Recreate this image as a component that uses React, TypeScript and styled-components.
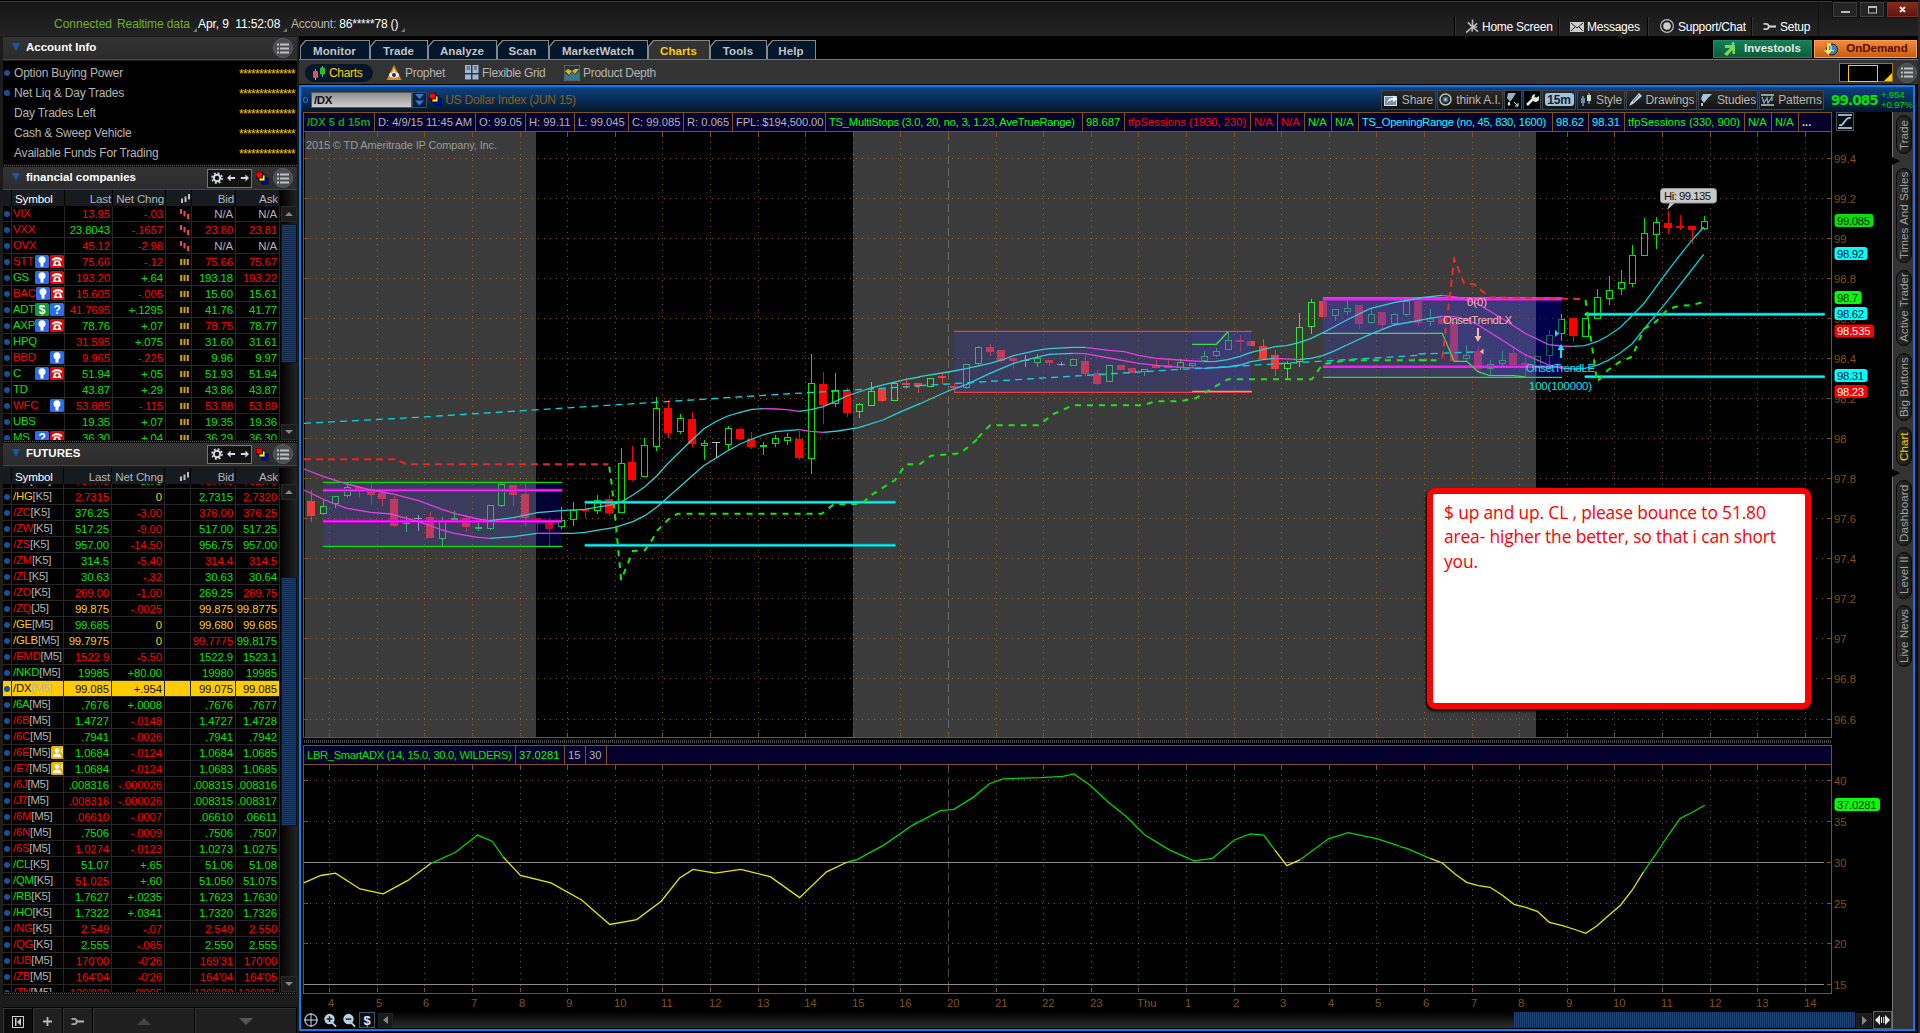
import React from 'react';
import styled, { createGlobalStyle, css } from 'styled-components';

const Global = createGlobalStyle`
  *{box-sizing:border-box}
  html,body{margin:0;padding:0;background:#000;overflow:hidden}
  body{font:11px/1 "Liberation Sans",Arial,sans-serif;color:#b4b4b4}
`;

const RED = '#ff0000', GREEN = '#00e400', YEL = '#ffcc00', GREY = '#b4b4b4', BROWN = '#80521a';
const colorOf: Record<string, string> = { r: RED, g: GREEN, y: YEL, w: GREY };

/* ---------- frame ---------- */
const Root = styled.div`width:1920px;height:1033px;display:flex;flex-direction:column;background:#000;white-space:nowrap;overflow:hidden;border-right:2px solid #2a2a2a`;
const Header = styled.header`height:36px;flex:none;display:flex;border-top:1px solid #000;box-shadow:inset 0 1px #3a3a3a;background:linear-gradient(#161616,#232323);padding-left:54px;font-size:12px`;
const Status = styled.div<{ $c: string; $w: number; $ls?: number }>`width:${p => p.$w}px;padding-top:17px;color:${p => p.$c};letter-spacing:${p => p.$ls ?? 0}px;flex:none;& b{font-weight:400;color:#fff}`;
const Corner = styled.i`display:inline-block;border-left:4px solid transparent;border-bottom:4px solid #777;margin-left:3px;transform:translateY(4px)`;
const HeadLinks = styled.nav`display:flex;margin-left:auto;padding-top:16px`;
const HeadLink = styled.a<{ $w: number }>`width:${p => p.$w}px;height:19px;border-left:1px solid #000;box-shadow:inset 1px 0 #333;display:flex;align-items:center;gap:3px;color:#fff;font-size:12px;padding-left:11px;letter-spacing:-.25px`;
const WinButtons = styled.div`display:flex;width:100px;gap:1px;padding-left:13px;border-left:1px solid #111`;
const WinBtn = styled.button<{ $close?: boolean; $w: number }>`height:17px;width:${p => p.$w}px;flex:none;padding:0;border:1px solid #111;box-shadow:inset 0 0 0 1px ${p => (p.$close ? '#7a2c20' : '#3c3c3c')};background:${p => (p.$close ? 'linear-gradient(#8a2a1c,#5c150c)' : '#242424')};display:flex;align-items:center;justify-content:center`;
const Body = styled.div`display:flex;height:997px`;

/* ---------- left side ---------- */
const Left = styled.aside`width:299px;flex:none;padding:1px 2px 0 3px;background:#1b1b1b;display:flex;flex-direction:column`;
const GadgetHead = styled.div`height:23px;flex:none;display:flex;align-items:center;background:linear-gradient(#333,#2b2b2b);border-bottom:1px solid #444;padding:0 4px 0 9px;color:#fff;font-weight:700;font-size:11.5px;
  & span{margin-left:6px;flex:1}`;
const Tri = styled.i`border:4.5px solid transparent;border-top:8px solid #1557b0;border-bottom:0;margin-top:-2px`;
const ListBtn = styled.i`width:20px;height:20px;border-radius:50%;background:#4a4d52;border:1px solid #5a5f66;display:flex;align-items:center;justify-content:center;margin-left:4px`;
const ToolBox = styled.i`width:45px;height:19px;border:1px solid #a87000;background:#111;display:flex;align-items:center;justify-content:center;gap:4px;margin-right:4px`;
const Account = styled.div`height:104px;flex:none;background:#000;padding:2px 2px 0 0;border-top:1px solid #222`;
const AccRow = styled.div`height:20px;display:flex;align-items:center;font-size:12px;letter-spacing:-.2px;& span{flex:1}& b{color:${YEL};font-weight:400;letter-spacing:-.67px;font-size:12px;padding-top:1px}`;
const Dot = styled.i<{ $on?: boolean; $m?: number }>`width:6px;height:6px;border-radius:50%;background:${p => (p.$on === false ? 'none' : '#1a4f96')};margin:0 ${p => p.$m ?? 0}px 0 1px;flex:none`;
const Dotted = styled.div`height:3px;flex:none;background:repeating-linear-gradient(90deg,#000 0 1px,#555 1px 2px);border:solid #111;border-width:1px 0`;
const Quotes = styled.div<{ $h: number; $gap: number }>`display:flex;height:${p => p.$h}px;margin-top:${p => p.$gap}px;flex:none;background:#000;overflow:hidden`;
const QTable = styled.div`width:277px;display:flex;flex-direction:column`;
const QHead = styled.div<{ $c: string }>`display:grid;grid-template-columns:${p => p.$c};height:16px;flex:none;background:#151b1f;font-size:11.6px;letter-spacing:-.15px;
  & > *{border-right:1px solid #000;padding:3px 1px 0 0;text-align:right}& > .s{text-align:left;padding-left:3px;color:#fff}`;
const QRows = styled.div`flex:1;min-height:0;overflow:hidden`;
const QShift = styled.div<{ $shift: number }>`margin-top:${p => p.$shift}px`;
const QRow = styled.div<{ $c: string; $sel?: boolean }>`display:grid;grid-template-columns:${p => p.$c};height:16px;background:${p => (p.$sel ? YEL : '#000')};
  & > *{border-right:1px solid #262626;border-bottom:1px solid #262626;height:16px;overflow:hidden}
  & > :first-child{display:flex;align-items:center}`;
const Num = styled.div<{ $c: string }>`color:${p => p.$c};text-align:right;padding:3px 2px 0 0;font-size:11.4px;letter-spacing:-.12px`;
const Sym = styled.div<{ $c: string }>`color:${p => p.$c};display:flex;align-items:center;font-size:11.4px;letter-spacing:-.25px;padding:1px 0 0 1px;& em{font-style:normal;color:${GREY}}& svg{flex:none;margin:-1px 0 0 1px}& svg:first-of-type{margin-left:auto}`;
const Trend = styled.div`display:flex;align-items:center;justify-content:flex-end;padding-right:2px`;
const Scroll = styled.div`width:17px;display:flex;flex-direction:column;background:linear-gradient(90deg,#000,#242424);padding-left:1px`;
const ScrollBtn = styled.i<{ $up?: boolean }>`height:16px;flex:none;background:#1c1c1c;border:1px solid #2a2a2a;display:flex;align-items:center;justify-content:center;
  &::after{content:"";border:4px solid transparent;${p => (p.$up ? 'border-bottom:4px solid #888;border-top:0' : 'border-top:4px solid #888;border-bottom:0')}}`;
const Thumb = styled.i<{ $h: number }>`height:${p => p.$h}px;flex:none;background:repeating-linear-gradient(#1c3c66 0 1px,#122a4b 1px 2px);border:1px solid #0a1526`;
const Space = styled.i<{ $h: number }>`height:${p => p.$h}px;flex:none`;
const LeftFoot = styled.div`height:26px;flex:none;display:flex;margin-top:12px;background:#1d1d1d;border-top:1px solid #050505`;
const FootBtn = styled.button<{ $w: number; $on?: boolean }>`width:${p => p.$w}px;border:0;border-right:1px solid #000;box-shadow:inset 1px 1px #333;background:${p => (p.$on ? '#0c0c0c' : '#1f1f1f')};padding:2px 0 0;display:flex;align-items:center;justify-content:center`;

/* ---------- right side ---------- */
const Main = styled.main`flex:1;min-width:0;display:flex;flex-direction:column`;
const TabRow = styled.div`height:23px;display:flex;align-items:flex-end;padding-left:1px;padding-right:1px`;
const Tab = styled.a<{ $w: number; $on?: boolean }>`width:${p => p.$w}px;height:19px;clip-path:polygon(5px 0,100% 0,100% 100%,0 100%,0 6px);background:#888;padding:1px 1px 0 1px;flex:none;
  & span{display:flex;height:18px;align-items:center;justify-content:center;clip-path:polygon(5px 0,100% 0,100% 100%,0 100%,0 6px);background:${p => (p.$on ? '#333' : '#04162a')};color:${p => (p.$on ? YEL : '#c4c4c4')};font-weight:700;font-size:11.5px;letter-spacing:.1px;padding:3px 1px 0 0}`;
const Promo = styled.a<{ $w: number; $o?: boolean }>`width:${p => p.$w}px;height:18px;margin:0 0 1px 2px;display:flex;align-items:center;justify-content:center;gap:8px;font-weight:700;font-size:11.5px;
  background:${p => (p.$o ? 'linear-gradient(#f08b3a,#c85e10)' : 'linear-gradient(#148055,#0a5c3a)')};color:${p => (p.$o ? '#5c0d05' : '#e8e8e8')};border:1px solid ${p => (p.$o ? '#ffa050' : '#1b8a60')}`;
const PromoGap = styled.i`flex:1`;
const SubBar = styled.div`height:26px;flex:none;background:#333;border-top:1px solid #777;border-bottom:1px solid #000;display:flex;align-items:center;padding:1px 1px 0 6px;font-size:12px;letter-spacing:-.3px`;
const SubItem = styled.a<{ $w: number; $on?: boolean }>`width:${p => p.$w}px;height:18px;display:flex;align-items:center;gap:3px;flex:none;
  ${p => p.$on && css`background:#04162a;border-radius:9px;color:${YEL};padding-left:7px;margin-right:13px;`}`;
const LayoutBox = styled.i`width:54px;height:19px;border:1px solid #a87000;background:#000;margin-left:auto;display:flex;align-items:center;padding-left:8px;position:relative;
  &::before{content:"";width:28px;height:15px;border:1px solid ${YEL};margin-top:1px}
  &::after{content:"";position:absolute;right:0;bottom:0;border-left:8px solid transparent;border-bottom:8px solid ${YEL}}`;
const Frame = styled.section`flex:none;height:946px;width:1616px;border:2px solid #0a7cf5;display:flex;flex-direction:column;background:#000`;
const SymbolBar = styled.div`height:25px;flex:none;background:linear-gradient(#0d4282,#04162b);display:flex;align-items:center;padding-left:2px;color:#8a6010;font-size:12px;letter-spacing:-.2px`;
const Ring = styled.i`width:5px;height:6px;border:1px solid #1f6fd0;border-radius:50%;margin-right:3px`;
const Input = styled.div`width:101px;height:16px;border:1px solid #555;background:linear-gradient(#8f8f8f,#cfcfcf);color:#111;font-weight:700;font-size:11.5px;padding:2px;letter-spacing:-.4px`;
const Drop = styled.i`width:15px;height:16px;background:#0a1f3c;border:1px solid #3a4a60;display:flex;align-items:center;justify-content:center;margin-right:2px`;
const Tools = styled.div`display:flex;height:20px;margin-left:auto;gap:1px`;
const Tool = styled.button<{ $w: number; $dark?: boolean }>`width:${p => p.$w}px;height:20px;font:12px "Liberation Sans",Arial,sans-serif;letter-spacing:-.15px;color:#b4b4b4;background:${p => (p.$dark ? '#000' : 'linear-gradient(#2a2a2a,#141414)')};border:1px solid #3c444e;padding:0;display:flex;align-items:center;justify-content:center;gap:4px`;
const Period = styled.b`background:#9fc1da;border-radius:3px;color:#123;width:29px;height:13px;line-height:14px;font-size:12px`;
const Price = styled.b`color:${GREEN};font-size:13.5px;width:54px;padding-left:7px;font-family:"DejaVu Sans",Verdana,sans-serif;letter-spacing:-.9px;padding-top:3px`;
const Change = styled.div`width:35px;color:${GREEN};font-size:9.6px;line-height:10px;padding-left:3px;opacity:.9`;
const Inner = styled.div`display:flex;flex:1;min-height:0`;
const Charts = styled.div`width:1591px;padding-left:2px;display:flex;flex-direction:column;& > svg{display:block;flex:none}`;
const InfoRow = styled.div`height:20px;flex:none;display:flex`;
const Info = styled.div<{ $w?: number }>`height:20px;width:${p => (p.$w ? p.$w + 'px' : 'auto')};display:flex;border:1px solid ${BROWN};border-width:1px 1px 1px 0;background:#05002c;flex:none`;
const Cell = styled.div<{ $w: number; $c?: string; $b?: boolean; $ls?: number }>`width:${p => p.$w}px;border-left:1px solid ${BROWN};padding:4px 0 0 3px;font-size:11.2px;color:${p => p.$c ?? GREY};font-weight:${p => (p.$b ? 700 : 400)};letter-spacing:${p => p.$ls ?? 0}px;flex:none`;
const CurveBtn = styled.i`width:18px;height:19px;border:1px solid #3d5468;background:#05080c;margin-left:4px;display:flex;align-items:center;justify-content:center`;
const Splitter = styled.div`height:6px;width:1529px;flex:none;background:repeating-linear-gradient(90deg,#000 0 1px,#4a4a4a 1px 2px);border:solid #000;border-width:1px 0 2px`;
const HScroll = styled.div`height:18px;display:flex;align-items:center;& > svg{margin-right:2px}`;
const HTrack = styled.div`flex:1;height:16px;background:linear-gradient(#000,#2c2c2c);display:flex;justify-content:flex-end`;
const HThumb = styled.i`width:341px;height:15px;background:repeating-linear-gradient(90deg,#1f4474 0 1px,#122a4b 1px 2px)`;
const HBtn = styled.i<{ $w: number; $b?: boolean }>`width:${p => p.$w}px;height:${p => (p.$b ? 18 : 15)}px;background:#1a1a1a;display:flex;align-items:center;justify-content:center;margin-left:1px;border:1px solid ${p => (p.$b ? '#4c6070' : '#222')}`;
const Side = styled.nav`width:21px;background:#333;border-left:1px solid #777;display:flex;flex-direction:column;align-items:center;padding:3px 0 0 1px`;
const SidePill = styled.a<{ $h: number; $gap: number; $on?: boolean }>`writing-mode:vertical-rl;transform:rotate(180deg);height:${p => p.$h}px;width:16px;margin-top:${p => p.$gap}px;border-radius:8px;border:1px solid #080808;background:linear-gradient(90deg,#191919,#2c2c2c);display:flex;align-items:center;justify-content:center;font-size:11.7px;color:${p => (p.$on ? YEL : '#a0a0a0')};flex:none`;
const Notch = styled.i`height:14px;width:100%;flex:none;display:flex;align-items:center;&::before{content:"";margin-left:-2px;border:4px solid transparent;border-left:8px solid #000;border-right:0}`;
const Stage = styled.div`position:relative;flex:none;height:607px;& svg{display:block}`;
const Note = styled.div`position:absolute;left:1124px;top:356px;width:384px;height:221px;border:6px solid #ff0000;border-radius:8px;background:#fff;color:#ff0000;font:17.4px/24.3px "Open Sans","Noto Sans",sans-serif;padding:6px 11px;box-shadow:-1px 2px 3px #000;letter-spacing:-.14px`;

/* ---------- icons ---------- */
const Gear = () => <svg width="12" height="12" viewBox="0 0 12 12"><circle cx="6" cy="6" r="3.2" fill="none" stroke="#d6d6e4" strokeWidth="2" /><circle cx="6" cy="6" r="5" fill="none" stroke="#d6d6e4" strokeWidth="1.6" strokeDasharray="2 1.93" /></svg>;
const Arrow = ({ flip }: { flip?: boolean }) => <svg width="9" height="8" viewBox="0 0 10 8"><path d={flip ? 'M10 4L6 0V3H1V5H6V8Z' : 'M0 4L4 0V3H9V5H4V8Z'} fill="#d6d6e4" /></svg>;
const Links = () => <svg width="13" height="13" viewBox="0 0 13 13"><g stroke="#000" strokeWidth=".8"><rect x="6" y="6" width="6" height="6" fill="#00f" /><rect x="3" y="3" width="6" height="6" fill="#ff0" /><rect x="0" y="0" width="6.5" height="6" fill="#f00" /></g></svg>;
const ListIcon = () => <svg width="12" height="11" viewBox="0 0 12 11"><path d="M0 1.5H2M3 1.5H12M0 5.5H2M3 5.5H12M0 9.5H2M3 9.5H12" stroke="#c2c2c2" strokeWidth="2" /></svg>;
const BarsIcon = ({ kind }: { kind: string }) => kind === 'y'
  ? <svg width="9" height="6"><path d="M1.2 0V6M4.5 0V6M7.8 0V6" stroke="#d9a400" strokeWidth="2" /></svg>
  : kind === 'd' ? <svg width="9" height="10"><path d="M1 0V5M4.5 2V7.5M8 5V10" stroke="#ff4040" strokeWidth="2" /></svg>
    : <svg width="9" height="9"><path d="M1 4.5V9M4.5 2.5V8M8 0V5.5" stroke="#bbb" strokeWidth="2" /></svg>;
const Flag = ({ k }: { k: string }) => {
  const bg: Record<string, string> = { b: '#2a6cf0', q: '#2a6cf0', t: '#e00808', s: '#0d9a3e', v: '#e8b800' };
  return <svg width="14" height="13" viewBox="0 0 14 13"><rect width="14" height="13" rx="1.5" fill={bg[k]} />
    {k === 'b' && <><circle cx="7" cy="4.8" r="3.5" fill="#fff" /><rect x="5.5" y="8" width="3" height="3.6" fill="#fff" /></>}
    {k === 't' && <><path d="M2 5.5V4Q7 0 12 4V5.5H9.6V4.4H4.4V5.5Z" fill="#fff" /><path d="M4.5 5.5H9.5L11.5 11H2.5Z" fill="#fff" /><circle cx="7" cy="8.3" r="1.5" fill="#e00808" /></>}
    {k === 's' && <text x="7" y="11" textAnchor="middle" fontSize="12" fontWeight="700" fill="#fff">$</text>}
    {k === 'q' && <text x="7" y="11" textAnchor="middle" fontSize="12" fontWeight="700" fill="#fff">?</text>}
    {k === 'v' && <><circle cx="6" cy="4.6" r="2.4" fill="#fff" /><path d="M2 11Q2 8 6 7.6Q10 8 10 11Z" fill="#fff" /><path d="M10 3.2Q11 4.7 10 6.2M11.6 2Q13.2 4.7 11.6 7.4" stroke="#fff" fill="none" /></>}
  </svg>;
};
const Wrench = ({ c = '#ccc' }: { c?: string }) => <svg width="14" height="9" viewBox="0 0 14 9" fill="none" stroke={c}><path d="M.5 1.8H3A2.7 2.7 0 0 1 3 7.200H.5" strokeWidth="1.7" /><path d="M5.500 4.500H13" strokeWidth="2.200" /></svg>;

/* ---------- quote data ---------- */
type Q = [string, string, string, string, string, string, string, string];
/* symbol, flags, last, net change, trend, bid, ask, colour codes for symbol/last/change/bid/ask */
const companies: Q[] = [
  ['VIX', '', '13.95', '-.03', 'd', 'N/A', 'N/A', 'rrrww'], ['VXX', '', '23.8043', '-.1657', 'd', '23.80', '23.81', 'rgrrr'],
  ['OVX', '', '45.12', '-2.98', 'd', 'N/A', 'N/A', 'rrrww'], ['STT', 'bt', '75.66', '-.12', 'y', '75.66', '75.67', 'rrrrr'],
  ['GS', 'bt', '193.20', '+.64', 'y', '193.18', '193.22', 'grggr'], ['BAC', 'bt', '15.605', '-.005', 'y', '15.60', '15.61', 'rrrgg'],
  ['ADT', 'sq', '41.7695', '+.1295', 'y', '41.76', '41.77', 'grggg'], ['AXP', 'bt', '78.76', '+.07', 'y', '78.75', '78.77', 'gggrg'],
  ['HPQ', '', '31.595', '+.075', 'y', '31.60', '31.61', 'grggg'], ['BBD', 'b', '9.965', '-.225', 'y', '9.96', '9.97', 'rrrgg'],
  ['C', 'bt', '51.94', '+.05', 'y', '51.93', '51.94', 'ggggg'], ['TD', '', '43.87', '+.29', 'y', '43.86', '43.87', 'ggggg'],
  ['WFC', 'b', '53.885', '-.115', 'y', '53.88', '53.89', 'rrrrr'], ['UBS', '', '19.35', '+.07', 'y', '19.35', '19.36', 'ggggg'],
  ['MS', 'qt', '36.30', '+.04', 'y', '36.29', '36.30', 'ggggg'],
];
const futures: Q[] = [
  ['/PA[M5]', '', '767.40', '+5.75', '', '767.40', '762.70', 'grgrr'], ['/HG[K5]', '', '2.7315', '0', '', '2.7315', '2.7320', 'yrygr'],
  ['/ZC[K5]', '', '376.25', '-3.00', '', '376.00', '376.25', 'rgrrr'], ['/ZW[K5]', '', '517.25', '-9.00', '', '517.00', '517.25', 'rgrgg'],
  ['/ZS[K5]', '', '957.00', '-14.50', '', '956.75', '957.00', 'rgrgg'], ['/ZM[K5]', '', '314.5', '-5.40', '', '314.4', '314.5', 'rgrrr'],
  ['/ZL[K5]', '', '30.63', '-.32', '', '30.63', '30.64', 'rgrgg'], ['/ZO[K5]', '', '269.00', '-1.00', '', '269.25', '269.75', 'rrrgr'],
  ['/ZQ[J5]', '', '99.875', '-.0025', '', '99.875', '99.8775', 'ryryy'], ['/GE[M5]', '', '99.685', '0', '', '99.680', '99.685', 'ygyyy'],
  ['/GLB[M5]', '', '99.7975', '0', '', '99.7775', '99.8175', 'yyyrg'], ['/EMD[M5]', '', '1522.9', '-5.50', '', '1522.9', '1523.1', 'rrrgg'],
  ['/NKD[M5]', '', '19985', '+80.00', '', '19980', '19985', 'ggggg'], ['/DX[M5]', '', '99.085', '+.954', '', '99.075', '99.085', 'kkkkk'],
  ['/6A[M5]', '', '.7676', '+.0008', '', '.7676', '.7677', 'ggggg'], ['/6B[M5]', '', '1.4727', '-.0148', '', '1.4727', '1.4728', 'rgrgg'],
  ['/6C[M5]', '', '.7941', '-.0026', '', '.7941', '.7942', 'rgrgg'], ['/6E[M5]', 'v', '1.0684', '-.0124', '', '1.0684', '1.0685', 'rgrgg'],
  ['/E7[M5]', 'v', '1.0684', '-.0124', '', '1.0683', '1.0685', 'rgrgg'], ['/6J[M5]', '', '.008316', '-.000026', '', '.008315', '.008316', 'rgrgg'],
  ['/J7[M5]', '', '.008316', '-.000026', '', '.008315', '.008317', 'rrrgg'], ['/6M[M5]', '', '.06610', '-.0007', '', '.06610', '.06611', 'rrrgg'],
  ['/6N[M5]', '', '.7506', '-.0009', '', '.7506', '.7507', 'rgrgg'], ['/6S[M5]', '', '1.0274', '-.0123', '', '1.0273', '1.0275', 'rrrgg'],
  ['/CL[K5]', '', '51.07', '+.65', '', '51.06', '51.08', 'ggggg'], ['/QM[K5]', '', '51.025', '+.60', '', '51.050', '51.075', 'grggg'],
  ['/RB[K5]', '', '1.7627', '+.0235', '', '1.7623', '1.7630', 'ggggg'], ['/HO[K5]', '', '1.7322', '+.0341', '', '1.7320', '1.7326', 'ggggg'],
  ['/NG[K5]', '', '2.549', '-.07', '', '2.549', '2.550', 'rrrrr'], ['/QG[K5]', '', '2.555', '-.065', '', '2.550', '2.555', 'rgrgg'],
  ['/UB[M5]', '', "170'00", "-0'26", '', "169'31", "170'00", 'rrrrr'], ['/ZB[M5]', '', "164'04", "-0'26", '', "164'04", "164'05", 'rrrrr'],
  ['/ZN[M5]', '', "129'020", "-0'095", '', "129'020", "129'025", 'rrrrr'],
];

const QuoteTable = ({ rows, cols, height, shift, gap, top, thumb }: { rows: Q[]; cols: string; height: number; shift: number; gap: number; top: number; thumb: number }) => (
  <Quotes $h={height} $gap={gap}>
    <QTable>
      <QHead $c={cols}><div /><div className="s">Symbol</div><div>Last</div><div>Net Chng</div><div><BarsIcon kind="h" /></div><div>Bid</div><div>Ask</div></QHead>
      <QRows><QShift $shift={shift}>
        {rows.map(([s, flags, last, chg, trend, bid, ask, c]) => {
          const sel = c[0] === 'k';
          const col = (i: number) => (sel ? '#111' : colorOf[c[i]]);
          const [root, month] = s.split('[');
          return (
            <QRow key={s} $c={cols} $sel={sel}>
              <div><Dot /></div>
              <Sym $c={col(0)}>{root}{month && <em>[{month}</em>}{flags.split('').map(f => <Flag key={f} k={f} />)}</Sym>
              <Num $c={col(1)}>{last}</Num><Num $c={col(2)}>{chg}</Num>
              <Trend>{trend && <BarsIcon kind={trend} />}</Trend>
              <Num $c={col(3)}>{bid}</Num><Num $c={col(4)}>{ask}</Num>
            </QRow>
          );
        })}
      </QShift></QRows>
    </QTable>
    <Scroll><Space $h={16} /><ScrollBtn $up /><Space $h={top} /><Thumb $h={thumb} /><Space $h={height - 48 - top - thumb} /><ScrollBtn /></Scroll>
  </Quotes>
);
const QuoteHead = ({ title }: { title: string }) => (
  <GadgetHead><Tri /><span>{title}</span><ToolBox><Gear /><Arrow /><Arrow flip /></ToolBox><Links /><ListBtn><ListIcon /></ListBtn></GadgetHead>
);

/* ---------- chart data ---------- */
const hours = [329, 377, 424, 472, 520, 567, 615, 662, 710, 758, 805, 853, 900, 948, 996, 1043, 1091, 1138, 1186, 1234, 1281, 1329, 1376, 1424, 1472, 1519, 1567, 1614, 1662, 1710, 1757, 1805];
const hourNames = ['4', '5', '6', '7', '8', '9', '10', '11', '12', '13', '14', '15', '16', '20', '21', '22', '23', 'Thu', '1', '2', '3', '4', '5', '6', '7', '8', '9', '10', '11', '12', '13', '14'];

/* each page of history has its own origin; y values are thirds of a pixel */
type Page = { x: number; y: number; s: number };
const A: Page = { x: 300, y: 360, s: 2.529 }, B: Page = { x: 860, y: 280, s: 2.8 }, C: Page = { x: 1300, y: 180, s: 2.529 }, D: Page = { x: 1400, y: 740, s: 3 };
type Bar = [string, number, number, number?, number?]; // colour, body top, body bottom, high, low
const pageA: Bar[] = [
  ['r', 423, 467, 390, 486], ['g', 438, 462, 418, 466], ['g', 408, 431, 408, 444], ['g', 381, 408, 370, 411], ['r', 381, 391, 381, 411], ['r', 390, 405, 369, 435], ['r', 399, 417, 399, 438], ['r', 417, 498, 408, 501], ['g', 481, 491, 468, 516], ['w', 475, 475, 465, 513],
  ['r', 471, 534, 456, 534], ['g', 481, 536, 471, 558], ['g', 475, 481, 453, 484], ['r', 474, 501, 465, 516], ['g', 501, 507, 489, 513], ['g', 435, 507, 435, 510], ['g', 373, 437, 369, 440], ['r', 375, 405, 375, 438], ['r', 402, 474, 369, 498], ['r', 474, 484, 474, 520],
  ['r', 484, 507, 474, 558], ['g', 481, 500, 441, 507], ['g', 450, 480, 426, 498], ['r', 448, 453, 432, 475], ['g', 420, 452, 405, 461], ['r', 417, 459, 405, 468], ['g', 310, 458, 264, 458], ['r', 306, 360, 258, 363], ['g', 256, 350, 234, 350], ['g', 145, 260, 111, 273],
  ['r', 144, 219, 120, 234], ['g', 175, 216, 162, 222], ['r', 177, 252, 156, 261], ['g', 249, 258, 240, 300], ['w', 247, 247, 247, 294], ['g', 205, 254, 198, 270], ['r', 207, 237, 204, 240], ['r', 237, 261, 216, 267], ['g', 256, 261, 246, 285], ['g', 235, 251, 225, 261],
  ['g', 232, 242, 219, 255], ['r', 237, 294, 213, 300], ['g', 70, 297, -18, 342], ['r', 72, 135, 36, 192], ['g', 91, 131, 39, 141], ['r', 93, 159, 84, 171], ['g', 133, 156, 129, 174],
];
const pageB: Bar[] = [
  ['g', 333, 377, 306, 377], ['r', 324, 362, 324, 365], ['g', 310, 362, 306, 362], ['r', 309, 315, 294, 327], ['r', 309, 318, 309, 339], ['g', 295, 320], ['r', 288, 294, 279, 312], ['r', 318, 324, 310, 336], ['g', 253, 323, 253, 327], ['g', 202, 251, 198, 258],
  ['r', 201, 216, 192, 228], ['r', 210, 243, 210, 249], ['r', 234, 243, 231, 267], ['w', 241, 241, 225, 261], ['g', 235, 248, 222, 261], ['r', 240, 249, 240, 258], ['w', 253, 253, 246, 258], ['g', 238, 257], ['r', 243, 282, 225, 288], ['r', 279, 312, 270, 315],
  ['g', 256, 305], ['r', 255, 270], ['r', 264, 279], ['g', 268, 277, 268, 288], ['r', 255, 264, 240, 264], ['r', 255, 264, 240, 264], ['g', 247, 265, 237, 270], ['g', 250, 257, 250, 261], ['g', 229, 242, 213, 246], ['g', 214, 227, 204, 231],
  ['g', 181, 209, 156, 209], ['r', 180, 186, 165, 216], ['r', 183, 198], ['r', 198, 237, 177, 240], ['r', 225, 267, 210, 288], ['g', 249, 266, 243, 297], ['g', 142, 246, 99, 261], ['g', 67, 140, 57, 162], ['r', 63, 111], ['g', 87, 107, 87, 123],
  ['g', 85, 95, 61, 105], ['r', 75, 132, 75, 147], ['g', 103, 128, 84, 133], ['r', 96, 135, 96, 147], ['g', 103, 131, 98, 138], ['g', 63, 104, 54, 110],
];
const pageC: Bar[] = [
  ['r', 362, 429, 362, 438], ['g', 415, 425, 387, 438], ['r', 415, 432], ['r', 426, 543], ['g', 525, 536, 495, 543], ['r', 513, 567, 498, 573], ['g', 552, 567, 540, 585], ['g', 541, 552, 513, 561], ['r', 519, 555, 498, 555], ['r', 549, 555, 528, 591],
  ['g', 528, 560], ['g', 466, 528, 451, 561], ['g', 417, 461, 403, 483], ['r', 414, 468, 414, 486], ['g', 415, 470], ['g', 352, 418, 327, 418], ['g', 331, 356, 288, 375], ['g', 307, 326, 270, 345], ['g', 226, 311, 195, 321], ['g', 160, 227, 114, 227],
  ['g', 127, 164, 111, 207], ['r', 129, 144, 93, 162], ['r', 138, 143, 105, 150], ['r', 138, 150, 138, 192], ['g', 124, 147, 108, 150],
];
const barX = (k: number) => Math.round(311 + 11.905 * k);
const Bars = ({ page, from, bars }: { page: Page; from: number; bars: Bar[] }) => (
  <g shapeRendering="crispEdges">
    {bars.map(([c, t, b, h = t, l = b], i) => {
      const x = barX(from + i), k = from + i;
      const grey = x < 536 || (x > 853 && x < 1536);
      const y = (v: number) => Math.round(page.y + v / 3);
      const col = c === 'w' ? '#b8b8b8' : c === 'r' ? (grey ? '#f03c3c' : '#ff0000') : grey ? '#3ce03c' : '#00e400';
      if (c === 'w') return <path key={k} d={`M${x - 4} ${y(t) + 0.5}H${x + 4}M${x + 0.5} ${y(h)}V${y(l)}`} stroke={col} />;
      if (c === 'r') return <g key={k} fill={col}><rect x={x - 4} y={y(t)} width="8" height={Math.max(2, y(b) - y(t))} /><rect x={x} y={y(h)} width="1" height={y(l) - y(h)} /></g>;
      return <g key={k}><path d={`M${x + 0.5} ${y(h)}V${y(t)}M${x + 0.5} ${y(b)}V${y(l)}`} stroke={col} /><rect x={x - 2.5} y={y(t) + 0.5} width="6" height={Math.max(1, y(b) - y(t) - 1)} fill="none" stroke={col} /></g>;
    })}
  </g>
);

const MAG = '#e83ce8', CY = '#2fd0d4';
const at = (p: Page, s: string) => s.trim().split(' ').map(v => { const [a, b] = v.split(','); return `${(p.x + +a / p.s).toFixed(1)},${(p.y + +b / 3).toFixed(1)}`; }).join(' ');
const Line = ({ p, d, c, w = 1.3, dash }: { p: Page; d: string; c: string; w?: number; dash?: string }) => <polyline points={at(p, d)} fill="none" stroke={c} strokeWidth={w} strokeDasharray={dash} />;

const averages: [Page, string, string][] = [
  [A, MAG, '10,327 60,350 119,372 179,390 239,403 300,422 359,448 390,460 450,477 480,482'],
  [A, CY, '480,482 540,473 600,458 660,452 720,448 790,434 812,426 842,405 872,380 902,348 931,310 991,240 1021,207 1051,185 1082,168 1113,157 1143,148 1173,146'],
  [A, MAG, '1173,146 1203,147 1232,149 1262,154'],
  [A, CY, '1262,154 1292,149 1323,140 1353,125 1383,108 1443,84 1480,73 1532,58 1568,51'],
  [A, MAG, '10,390 58,417 88,432 119,445 179,457 230,462 300,485 359,510 390,520 450,532 480,535'],
  [A, CY, '480,535 540,530 600,520'], [A, MAG, '600,520 660,520'],
  [A, CY, '660,520 690,520 720,517 797,502 842,485 872,467 902,442 931,412 991,348 1021,317 1082,272 1113,252 1143,237 1173,224 1203,215 1262,209'],
  [A, MAG, '1262,209 1292,214 1323,217'], [A, CY, '1323,217 1360,213 1413,203 1474,180 1520,155 1568,131'],
  [B, CY, '166,290 247,276 297,266 364,250 397,240 430,227 495,211 529,206 596,202 630,202'],
  [B, MAG, '630,202 697,211 740,215 780,226 829,235 895,240 962,245'],
  [B, CY, '962,245 995,244 1030,239 1064,229 1095,217 1128,209 1162,200 1195,197 1229,188 1262,176 1296,158 1363,120 1428,86 1495,68 1568,54'],
  [B, CY, '166,372 247,333 297,314 364,280 430,250 460,241 529,223 596,220'],
  [B, MAG, '596,220 630,221 697,234 780,250 862,260 962,265'],
  [B, CY, '962,265 1030,261 1064,255 1095,245 1128,239 1162,235'], [B, MAG, '1162,235 1229,239'],
  [B, CY, '1229,239 1262,235 1296,227 1330,212 1363,195 1428,163 1495,135 1568,121'],
  [C, CY, '300,354 359,346'], [C, MAG, '359,346 400,352 450,372 508,413 569,460 629,494 660,498 690,499'],
  [C, '#00d0d8', '690,499 720,497 751,485 779,467 809,443 840,407 870,370 930,273 960,227 990,182 1021,141'],
  [C, CY, '300,421 359,409'], [C, MAG, '359,409 390,410 420,417 450,434 508,478 569,524 629,555 660,564 690,567'],
  [C, '#00d0d8', '690,567 720,565 751,556 779,541 809,520 840,491 870,447 930,362 990,270 1021,223'],
];

const GridV = ({ y1, y2, day }: { y1: number; y2: number; day: string }) => (
  <g stroke="rgba(190,130,60,.66)" shapeRendering="crispEdges">
    {hours.map((x, i) => i === 13 ? <path key={x} d={`M${x}.5 ${y1}V${y2}`} stroke={day} strokeDasharray="8 4" /> : <path key={x} d={`M${x}.5 ${y1 + 4}V${y2}`} strokeDasharray="1 5" />)}
    {hours.map(x => <path key={'t' + x} d={`M${x}.5 ${y1}v5M${x}.5 ${y2}v-4`} stroke="#80521a" />)}
  </g>
);

const Tag = ({ y, w, bg, fg, t }: { y: number; w: number; bg: string; fg: string; t: string }) => (
  <g><rect x="1834.5" y={y - 6.5} width={w} height="13" rx="3" fill={bg} /><text x="1837" y={y + 4} fill={fg} fontSize="11.3" textLength={w - 6}>{t}</text></g>
);

const prices: [string, number][] = [['99.4', 158], ['99.2', 198], ['99', 238], ['98.8', 278], ['98.6', 318], ['98.4', 358], ['98.2', 398], ['98', 438], ['97.8', 478], ['97.6', 518], ['97.4', 558], ['97.2', 598], ['97', 638], ['96.8', 678], ['96.6', 719]];

const PriceChart = () => (
  <svg width="1589" height="607" viewBox="303 132 1589 607" fontFamily="Liberation Sans, Arial, sans-serif">
    <rect x="305" y="132" width="231" height="605" fill="#3b3b3b" /><rect x="853" y="132" width="683" height="605" fill="#3b3b3b" />
    <GridV y1={132} y2={737} day="#6a6a6a" />
    <g stroke="rgba(190,130,60,.66)" shapeRendering="crispEdges">{prices.map(([, y]) => <path key={y} d={`M304 ${y}.5H1826`} strokeDasharray="1 5" />)}</g>
    <path d="M303.5 132V737.5H1831.5V132" fill="none" stroke={BROWN} shapeRendering="crispEdges" />
    <g stroke={BROWN} shapeRendering="crispEdges">{prices.map(([, y]) => <path key={y} d={`M1827 ${y}.5h5M303 ${y}.5h5`} />)}</g>
    <g fill={BROWN} fontSize="11.3">{prices.map(([t, y]) => <text key={t} x="1834" y={y + 5}>{t}</text>)}</g>
    <text x="306" y="149" fill="#9a9a9a" fontSize="11" textLength="191">2015 © TD Ameritrade IP Company, Inc.</text>
    <Bars page={A} from={0} bars={pageA} /><Bars page={B} from={47} bars={pageB} /><Bars page={C} from={93} bars={pageC} />
    <rect x="323" y="482.5" width="213" height="64" fill="rgba(60,60,190,.27)" /><rect x="536" y="482.5" width="25" height="64" fill="rgba(0,0,190,.27)" />
    <rect x="954" y="331" width="297" height="61" fill="rgba(60,60,190,.27)" /><rect x="1192" y="331" width="59" height="60" fill="rgba(60,60,190,.2)" />
    <rect x="1323" y="299" width="213" height="78" fill="rgba(60,60,190,.27)" /><path d="M1323 299H1536V377H1480L1466 361H1454L1443 333H1323Z" fill="rgba(60,60,190,.27)" />
    <rect x="1536" y="299" width="25" height="78" fill="rgba(0,0,150,.5)" />
    <Line p={A} d="58,367 663,367" c="#00e400" /><Line p={A} d="58,559 663,559" c="#00e400" />
    <Line p={A} d="58,391 663,391" c="#e000e0" w={3} /><Line p={A} d="58,484 663,484" c="#e000e0" w={3} />
    <Line p={A} d="58,391 663,391" c="#ff30ff" w={1} /><Line p={A} d="58,484 663,484" c="#ff30ff" w={1} />
    <Line p={A} d="720,427 1506,427" c="#00b8c0" w={3} /><Line p={A} d="720,556 1506,556" c="#00b8c0" w={3} />
    <Line p={A} d="720,427 1506,427" c="#10ffff" w={1} /><Line p={A} d="720,556 1506,556" c="#10ffff" w={1} />
    <Line p={B} d="263,154 1097,154" c="#f03c3c" /><Line p={B} d="263,337 1097,337" c="#f03c3c" />
    <Line p={B} d="930,193 998,193 1030,155" c="#3ce03c" /><Line p={B} d="930,334 1097,334" c="#d8b020" />
    <Line p={C} d="58,354 663,354" c="#999" /><Line p={C} d="58,358 663,358" c="#f020f0" w={2.4} /><Line p={C} d="58,560 663,560" c="#f020f0" w={2.6} />
    <Line p={C} d="58,460 360,460 390,544 422,544 450,575 478,586 540,587 569,591" c="#3ce03c" /><Line p={C} d="58,592 663,592" c="#20e020" />
    <Line p={C} d="720,403 1327,403" c="#00c0c8" w={3} /><Line p={C} d="720,590 1327,590" c="#00c0c8" w={3} />
    <Line p={C} d="720,403 1327,403" c="#10ffff" w={1} /><Line p={C} d="720,590 1327,590" c="#10ffff" w={1} />
    {averages.map(([p, c, d], i) => <Line key={i} p={p} d={d} c={c} />)}
    <Line p={A} d="10,190 300,172 700,142 1200,104 1568,78" c="#00d8dc" dash="7 5" /><Line p={B} d="166,317 230,313 500,295 900,268 1300,243 1568,226" c="#00d8dc" dash="7 5" /><Line p={C} d="300,522 440,516" c="#00d8dc" dash="7 5" />
    <Line p={A} d="10,298 240,298 270,313 780,313" c="#ee2222" w={2} dash="7 5" />
    <Line p={A} d="782,320 788,370 795,450 805,570 812,660 842,573 872,571 890,540 905,510 930,480 955,461 1320,461 1350,433 1420,432 1445,405 1505,360 1532,313 1568,312 1596,287 1670,280 1716,235" c="#10e810" w={2} dash="6 6" />
    <Line p={B} d="330,473 364,436 500,436 540,403 596,376 790,376 829,364 895,364 940,355 995,319 1030,298 1265,298 1296,252 1363,241 1600,241" c="#20e020" w={2} dash="6 6" />
    <Line p={C} d="300,541 359,541" c="#20e020" w={2} dash="6 6" />
    <Line p={C} d="360,535 390,237 415,310 440,313 480,352 720,357" c="#ee2a2a" w={2} dash="7 5" />
    <Line p={C} d="722,360 735,470 751,605 779,570 809,545 840,530 870,447 900,425 930,388 960,377 990,376 1021,365" c="#00f000" w={2} dash="6 6" />
    <g fill="#ffb4a8"><text x="1467" y="306" fontSize="11.3">0(0)</text><text x="1443" y="324" fontSize="11.3" textLength="69">OnsetTrendLX</text><path d="M1477 328h2v8h2.5l-3.500 6l-3.500-6h2.500z" /><path d="M1480 351.500l3.500-3v6z" /></g>
    <g fill="#00e8f0"><text x="1526" y="372" fontSize="11.3" textLength="69">OnsetTrendLE</text><text x="1529" y="390" fontSize="11.3" textLength="63">100(100000)</text><path d="M1560 358h2v-8h2.500l-3.500-6l-3.500 6h2.500z" /><path d="M1559 333.500l-4-3.500v7z" /></g>
    <path d="M1667 210L1670 202H1676Z" fill="#c8c8c8" /><rect x="1660.500" y="188.500" width="56" height="14.500" rx="3" fill="#c8c8c8" stroke="#999" /><text x="1664" y="200" fontSize="11.3" fill="#111" textLength="47">Hi: 99.135</text>
    <Tag y={220.5} w={39} bg="#00e400" fg="#020" t="99.085" /><Tag y={253.5} w={33} bg="#00ffff" fg="#022" t="98.92" /><Tag y={297.5} w={27} bg="#00ff00" fg="#020" t="98.7" />
    <Tag y={313.5} w={33} bg="#00ffff" fg="#022" t="98.62" /><Tag y={331} w={39.5} bg="#ff0000" fg="#fff" t="98.535" /><Tag y={375.5} w={33} bg="#00ffff" fg="#022" t="98.31" /><Tag y={391.5} w={33} bg="#ff0000" fg="#fff" t="98.23" />
  </svg>
);

/* ADX points of the earlier sessions are kept on a 1568-wide grid and scaled up */
const adx = (s: string) => s.split(' ').map(v => v.split(',').map(n => (+n * 1.2245).toFixed(1)).join(',')).join(' ');
const AdxChart = () => (
  <svg width="1589" height="246" viewBox="303 765 1589 246" fontFamily="Liberation Sans, Arial, sans-serif">
    <GridV y1={765} y2={992} day="#4a4a4a" />
    <g shapeRendering="crispEdges">
      {[780, 821, 862, 903, 943, 984].map(y => <g key={y}><path d={`M304 ${y}.5H1826`} strokeDasharray="1 5" stroke="rgba(190,130,60,.66)" /><path d={`M1827 ${y}.5h5M303 ${y}.5h5`} stroke={BROWN} /></g>)}
      <path d="M304 862.5H1824M304 984.5H1824" stroke="#8c8c8c" />
      <path d="M303.5 765V993.5H1831.5V765" fill="none" stroke={BROWN} />
    </g>
    <g fill={BROWN} fontSize="11.3">
      {[['40', 780], ['35', 821], ['30', 862], ['25', 903], ['20', 943], ['15', 984]].map(([t, y]) => <text key={t} x="1834" y={+y + 5}>{t}</text>)}
      {hours.map((x, i) => <text key={x} x={x - 1} y="1007">{hourNames[i]}</text>)}
    </g>
    <g fill="none" strokeWidth="1.3">
      <g stroke="#e8e800">
        <polyline points={adx('248,721 262,715 274,713 294,726 313,730 333,719 352,705')} />
        <polyline points={adx('411,700 425,715 450,721 475,735 498,755 520,751 540,736 555,717 566,710 584,713 605,710 629,716 653,733 675,712 692,704')} />
        <polyline points={adx('1041,694 1051,707 1062,702')} />
        <polyline points={at(D, '90,355 127,369 165,402 200,427 235,437 270,442 305,464 342,493 377,502 412,514 448,547 485,556 520,567 557,580 590,558 625,527 662,495 697,450 731,395')} />
      </g>
      <g stroke="#00d400">
        <polyline points={adx('352,705 372,696 390,682 402,687 411,700')} />
        <polyline points={adx('692,704 700,702 722,690 745,674 768,662 779,661 795,651 808,640 819,636 850,635 868,634 877,632 890,641 905,655 920,667 935,682 955,694 975,703 990,701 1008,686 1021,681 1032,682 1041,694')} />
        <polyline points={adx('1062,702 1085,685 1101,680 1125,685 1143,691')} />
        <polyline points={at(D, '0,320 20,325 90,355')} />
        <polyline points={at(D, '731,395 767,343 803,288 841,235 877,217 914,196')} />
      </g>
    </g>
    <Tag y={804.5} w={45.5} bg="#00ff00" fg="#020" t="37.0281" />
  </svg>
);

const LIME = '#00ff00', AQUA = '#00ffff';
export default function App() {
  return (
    <Root>
      <Global />
      <Header>
        <Status $c="#6fae2d" $w={63}>Connected</Status>
        <Status $c="#6fae2d" $w={81} $ls={-0.1}>Realtime data<Corner /></Status>
        <Status $c="#fff" $w={93} $ls={-0.1}>Apr, 9&nbsp; 11:52:08<Corner /></Status>
        <Status $c={GREY} $w={120} $ls={-0.2}>Account: <b>86*****78 ()</b><Corner /></Status>
        <HeadLinks>
          <HeadLink $w={104}><svg width="13" height="16" viewBox="0 0 14 16"><path d="M7 0V7M7 8L12 4M7 8L2 3M7 8L13 13M7 8L0 14M7 8L6.500 13M7 8H12" stroke="#bbb" strokeWidth="1.700" /></svg>Home Screen</HeadLink>
          <HeadLink $w={89}><svg width="14" height="10" viewBox="0 0 14 10"><rect width="14" height="10" fill="#ccc" /><path d="M1 1L7 6L13 1M1 9L5 5M13 9L9 5" stroke="#222" fill="none" /></svg>Messages</HeadLink>
          <HeadLink $w={104}><svg width="16" height="15" viewBox="0 0 16 15"><circle cx="8" cy="7" r="6.400" fill="none" stroke="#bbb" strokeWidth="1.200" /><circle cx="8" cy="7" r="3.800" fill="#ccc" /></svg>Support/Chat</HeadLink>
          <HeadLink $w={67}><Wrench />Setup</HeadLink>
        </HeadLinks>
        <WinButtons>
          <WinBtn $w={26}><svg width="9" height="6"><path d="M0 5H9" stroke="#bbb" strokeWidth="2" /></svg></WinBtn>
          <WinBtn $w={26}><svg width="9" height="8"><rect x=".5" y="1" width="8" height="6" fill="none" stroke="#bbb" /><path d="M0 1H9" stroke="#bbb" strokeWidth="2" /></svg></WinBtn>
          <WinBtn $w={33} $close><svg width="7" height="7"><path d="M1 1L6 6M6 1L1 6" stroke="#ddd" strokeWidth="2" /></svg></WinBtn>
        </WinButtons>
      </Header>
      <Body>
        <Left>
          <GadgetHead><Tri /><span>Account Info</span><ListBtn><ListIcon /></ListBtn></GadgetHead>
          <Account>
            {['Option Buying Power', 'Net Liq & Day Trades', 'Day Trades Left', 'Cash & Sweep Vehicle', 'Available Funds For Trading'].map((t, i) => (
              <AccRow key={t}><Dot $on={i < 2} $m={4} /><span>{t}</span><b>**************</b></AccRow>
            ))}
          </Account>
          <Dotted />
          <QuoteHead title="financial companies" />
          <QuoteTable rows={companies} cols="9px 53px 48px 53px 26px 44px 44px" height={250} shift={0} gap={0} top={2} thumb={139} />
          <Dotted />
          <QuoteHead title="FUTURES" />
          <QuoteTable rows={futures} cols="9px 52px 48px 53px 26px 45px 44px" height={524} shift={-11} gap={2} top={77} thumb={249} />
          <Dotted />
          <LeftFoot>
            <FootBtn $w={30} $on><svg width="12" height="12"><rect x=".5" y=".5" width="11" height="11" fill="none" stroke="#ccc" /><path d="M3 2V10H4.500V2ZM9 2V10L5 6Z" fill="#ccc" /></svg></FootBtn>
            <FootBtn $w={30}><svg width="9" height="9"><path d="M4.500 0V9M0 4.500H9" stroke="#bbb" strokeWidth="1.800" /></svg></FootBtn>
            <FootBtn $w={30}><Wrench c="#aaa" /></FootBtn>
            <FootBtn $w={102}><svg width="14" height="7"><path d="M0 7L7 0L14 7Z" fill="#444" /></svg></FootBtn>
            <FootBtn $w={102}><svg width="14" height="7"><path d="M0 0L7 7L14 0Z" fill="#555" /></svg></FootBtn>
          </LeftFoot>
        </Left>
        <Main>
          <TabRow>
            {([['Monitor', 70], ['Trade', 58], ['Analyze', 69], ['Scan', 52], ['MarketWatch', 99], ['Charts', 62], ['Tools', 57], ['Help', 49]] as [string, number][]).map(([t, w]) => (
              <Tab key={t} $w={w} $on={t === 'Charts'}><span>{t}</span></Tab>
            ))}
            <PromoGap />
            <Promo $w={99}><svg width="12" height="14" viewBox="0 0 12 14"><path d="M1 3H11V12H8.500V8L3 14L0 12L6 6H1Z" fill="#7fd84a" /><circle cx="9" cy="1.500" r="1.500" fill="#8bd" /></svg>Investools</Promo>
            <Promo $w={103} $o><svg width="15" height="13" viewBox="0 0 15 13"><circle cx="9" cy="6.500" r="5.500" fill="#3f86b0" stroke="#123" /><path d="M8 3V7L11 8" stroke="#dff" fill="none" /><path d="M8 0H4V7H1L5.500 12L9 7H6V3H8Z" fill="#ffe060" /></svg>OnDemand</Promo>
          </TabRow>
          <SubBar>
            <SubItem $w={68} $on><svg width="14" height="14" viewBox="0 0 14 14"><path d="M3.500 3V14M10.500 0V11" stroke="#aaa" /><rect x="1" y="5" width="5" height="7" rx="1" fill="#e05050" /><rect x="8" y="1.500" width="5" height="7" rx="1" fill="#20c030" /></svg>Charts</SubItem>
            <SubItem $w={79}><svg width="16" height="16" viewBox="0 0 16 16"><path d="M8 0L15.500 15H.5Z" fill="#d98a28" /><path d="M8 3L10 8H6Z" fill="#ffd27a" /><ellipse cx="8" cy="10" rx="5" ry="2.800" fill="#eee" /><circle cx="8" cy="10" r="2" fill="#234" /></svg>Prophet</SubItem>
            <SubItem $w={99}><svg width="14" height="15" viewBox="0 0 14 15"><g fill="#9fb8d8"><rect width="6" height="8" /><rect x="7.500" width="6" height="8" /><rect y="9.500" width="6" height="5" /><rect x="7.500" y="9.500" width="6" height="5" /></g><path d="M1.500 2H5M1.500 4H5M9 2H12M9 4H12" stroke="#345" /></svg>Flexible Grid</SubItem>
            <SubItem $w={100}><svg width="16" height="16" viewBox="0 0 16 16"><rect width="16" height="16" rx="1" fill="#263238" stroke="#888" /><path d="M1 8L5 11L8 7L11 10L15 6V15H1Z" fill="#357a8c" /><path d="M1 6L4 4L8 6L11 4L15 4L11 9L8 6L5 10Z" fill="#e0b020" /></svg>Product Depth</SubItem>
            <LayoutBox /><ListBtn><ListIcon /></ListBtn>
          </SubBar>
          <Frame>
            <SymbolBar>
              <Ring /><Input>/DX</Input>
              <Drop><svg width="9" height="12"><path d="M0 0H9L4.500 5ZM0 6.500H9L4.500 11.500Z" fill="#2a7ae0" /></svg></Drop>
              <Links />&nbsp;US Dollar Index (JUN 15)
              <Tools>
                <Tool $w={55}><svg width="14" height="12" viewBox="0 0 14 12"><rect x=".5" y="2.500" width="12" height="9" fill="#7b93a8" stroke="#cde" /><path d="M3 9Q4 4 9 4V1.500L13.500 5L9 8V6Q5 6 3 9Z" fill="#fff" /></svg>Share</Tool>
                <Tool $w={66}><svg width="13" height="13" viewBox="0 0 13 13"><circle cx="6.500" cy="6.500" r="5.500" fill="none" stroke="#b8c4b0" strokeWidth="1.500" /><circle cx="6.500" cy="6.500" r="3" fill="#47708c" /><circle cx="6.500" cy="6.500" r="1" fill="#fff" /></svg>think A.I.</Tool>
                <Tool $w={18} $dark><svg width="14" height="15" viewBox="0 0 14 15"><path d="M2 1H10L7 6L4 10L1 6Z" fill="#8fb4c8" /><path d="M3 10L2 13H4ZM8 10L12 14M12 11V14H9" stroke="#dfd" fill="none" /></svg></Tool>
                <Tool $w={18} $dark><svg width="14" height="14" viewBox="0 0 14 14"><path d="M2 12L8 6" stroke="#dde8dd" strokeWidth="2.600" /><path d="M7 6A3.500 3.500 0 0 1 10 1L9.500 4L12 4.500L13.500 3A3.500 3.500 0 0 1 8 7.500Z" fill="#dde8dd" /></svg></Tool>
                <Tool $w={34}><Period>15m</Period></Tool>
                <Tool $w={48}><svg width="12" height="13" viewBox="0 0 12 13"><path d="M3 3V13M9 0V11" stroke="#bcd" /><rect x="1" y="5" width="4" height="5" fill="#5b8fb8" /><rect x="7" y="2" width="4" height="6" fill="#cdd8c8" /></svg>Style</Tool>
                <Tool $w={71}><svg width="13" height="14" viewBox="0 0 13 14"><path d="M0 13L2 9L10 0L13 3L4 11Z" fill="#c4d8e4" /><path d="M4 9L10 2" stroke="#567" /></svg>Drawings</Tool>
                <Tool $w={60}><svg width="13" height="14" viewBox="0 0 13 14"><path d="M3 1H12L8 5L4 10L1 6Z" fill="#a8c4d4" /><path d="M2 10V13" stroke="#efe" strokeWidth="1.500" /></svg>Studies</Tool>
                <Tool $w={65}><svg width="13" height="12" viewBox="0 0 13 12"><path d="M0 1H13M0 11H13" stroke="#b8c8b8" strokeWidth="1.500" /><path d="M1 3L3 9L6 4L7 9L11 3V7" stroke="#7fa8c8" fill="none" strokeWidth="1.300" /></svg>Patterns</Tool>
              </Tools>
              <Price>99.085</Price><Change>+.954<br />+0.97%</Change>
            </SymbolBar>
            <Inner>
              <Charts>
                <InfoRow>
                  <Info>
                    <Cell $w={71} $c="#12a012" $b>/DX 5 d 15m</Cell><Cell $w={101} $ls={-0.05}>D: 4/9/15 11:45 AM</Cell><Cell $w={50}>O: 99.05</Cell><Cell $w={49}>H: 99.11</Cell><Cell $w={54}>L: 99.045</Cell><Cell $w={55}>C: 99.085</Cell><Cell $w={49}>R: 0.065</Cell><Cell $w={93} $ls={-0.1}>FPL: $194,500.00</Cell>
                    <Cell $w={257} $c={LIME} $ls={-0.22}>TS_MultiStops (3.0, 20, no, 3, 1.23, AveTrueRange)</Cell><Cell $w={42} $c={LIME}>98.687</Cell><Cell $w={126} $c={RED}>tfpSessions (1930, 230)</Cell><Cell $w={27} $c={RED}>N/A</Cell><Cell $w={27} $c={RED}>N/A</Cell><Cell $w={27} $c={LIME}>N/A</Cell><Cell $w={27} $c={LIME}>N/A</Cell>
                    <Cell $w={194} $c={AQUA} $ls={-0.27}>TS_OpeningRange (no, 45, 830, 1600)</Cell><Cell $w={36} $c={AQUA}>98.62</Cell><Cell $w={36} $c={AQUA}>98.31</Cell><Cell $w={120} $c={LIME}>tfpSessions (330, 900)</Cell><Cell $w={27} $c={LIME}>N/A</Cell><Cell $w={27} $c={LIME}>N/A</Cell><Cell $w={33} $c="#ddd" $b>...</Cell>
                  </Info>
                  <CurveBtn><svg width="14" height="15" viewBox="0 0 14 15"><path d="M0 1H14M0 14H14" stroke="#ddd" strokeWidth="1.600" /><path d="M1 11C7 13 6 2 13 4" stroke="#8cc4e8" fill="none" strokeWidth="1.800" /></svg></CurveBtn>
                </InfoRow>
                <Stage>
                  <PriceChart />
                  <Note>$ up and up. CL , please bounce to 51.80<br />area- higher the better, so that i can short<br />you.</Note>
                </Stage>
                <Splitter />
                <Info $w={1529}>
                  <Cell $w={212} $c={GREEN} $ls={-0.33}>LBR_SmartADX (14, 15.0, 30.0, WILDERS)</Cell><Cell $w={49} $c={LIME}>37.0281</Cell><Cell $w={21}>15</Cell><Cell $w={21}>30</Cell><Cell $w={1} />
                </Info>
                <AdxChart />
                <HScroll>
                  <svg width="16" height="16" viewBox="0 0 16 16"><circle cx="8" cy="8" r="6" fill="none" stroke="#8aa0b8" strokeWidth="1.500" /><path d="M8 1V15M1 8H15" stroke="#c8d4e0" /></svg>
                  <svg width="17" height="16" viewBox="0 0 18 16"><circle cx="9" cy="7" r="5.500" fill="#bcd0e0" /><path d="M9 4V10M6 7H12" stroke="#123" strokeWidth="1.500" /><path d="M12 11L16 15" stroke="#bcd0e0" strokeWidth="2" /></svg>
                  <svg width="17" height="16" viewBox="0 0 18 16"><circle cx="9" cy="7" r="5.500" fill="#bcd0e0" /><path d="M6 7H12" stroke="#123" strokeWidth="1.500" /><path d="M12 11L16 15" stroke="#bcd0e0" strokeWidth="2" /></svg>
                  <svg width="16" height="16" viewBox="0 0 16 16"><rect x=".5" y=".5" width="15" height="15" fill="#0a0f14" stroke="#3d5468" /><text x="8" y="13" fontSize="13" fontWeight="700" textAnchor="middle" fill="#e8e8e8">$</text></svg>
                  <HBtn $w={15}><svg width="5" height="8"><path d="M5 0V8L0 4Z" fill="#888" /></svg></HBtn>
                  <HTrack><HThumb /></HTrack>
                  <HBtn $w={16}><svg width="5" height="9"><path d="M0 0V9L5 4.500Z" fill="#888" /></svg></HBtn>
                  <HBtn $w={19} $b><svg width="15" height="10" viewBox="0 0 15 10"><path d="M0 5L5 0V10ZM15 5L10 0V10ZM6 2H7V8H6ZM8.200 2H9.200V8H8.200Z" fill="#e4f0dc" /></svg></HBtn>
                </HScroll>
              </Charts>
              <Side>
                <SidePill $h={39} $gap={0}>Trade</SidePill>
                <Notch />
                {([['Times And Sales', 95, 0], ['Active Trader', 76, 7], ['Big Buttons', 68, 7], ['Chart', 39, 6]] as [string, number, number][]).map(([t, h, g]) => (
                  <SidePill key={t} $h={h} $gap={g} $on={t === 'Chart'}>{t}</SidePill>
                ))}
                <Notch />
                {([['Dashboard', 66, 0], ['Level II', 47, 6], ['Live News', 62, 6]] as [string, number, number][]).map(([t, h, g]) => (
                  <SidePill key={t} $h={h} $gap={g}>{t}</SidePill>
                ))}
              </Side>
            </Inner>
          </Frame>
        </Main>
      </Body>
    </Root>
  );
}
